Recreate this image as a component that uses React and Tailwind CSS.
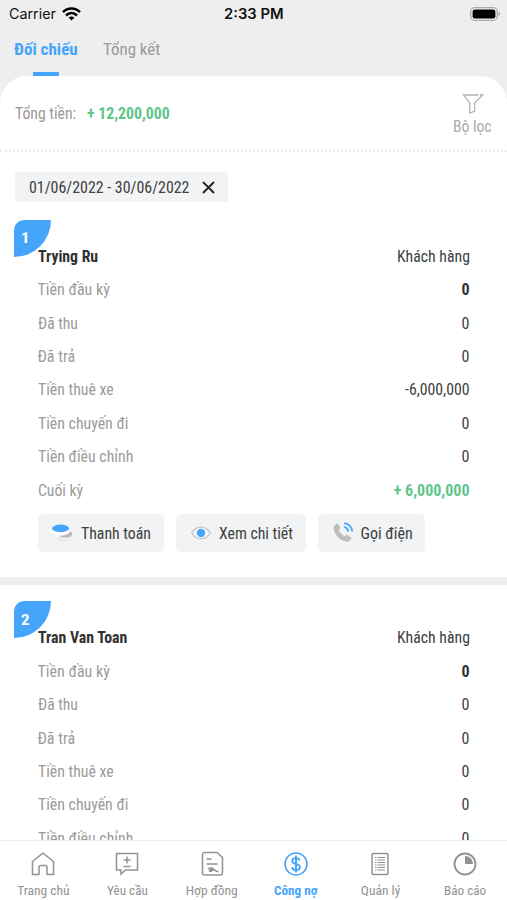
import { useLayoutEffect, useRef, useState } from "react";

// Single-line label condensed horizontally to the given width.
function Label({ w, right = false, className = "pt-[2px]", children }) {
  const ref = useRef(null);
  const [scale, setScale] = useState(1);
  useLayoutEffect(() => {
    setScale(w / ref.current.offsetWidth);
  }, [w, children]);
  return (
    <span className={`flex shrink-0 ${right ? "justify-end" : "justify-start"} ${className}`} style={{ width: w }}>
      <span
        ref={ref}
        className={`block shrink-0 whitespace-nowrap ${right ? "origin-right" : "origin-left"}`}
        style={{ transform: `scaleX(${scale})` }}
      >
        {children}
      </span>
    </span>
  );
}

function StatusBar() {
  return (
    <div className="flex h-[27px] shrink-0 items-center justify-between pl-[9px] pr-[6px] font-['Inter',sans-serif] text-[14px] text-[#111]">
      <div className="flex w-[215px] items-center gap-[6px]">
        <Label w={47} className="pt-px">Carrier</Label>
        <svg width="19" height="14" viewBox="0 0 19 14" fill="none" stroke="#000" strokeWidth="2.5">
          <path d="M1 5.2C5.8.3 13.2.3 18 5.2" />
          <path d="M4 8.5c3.2-3.2 7.8-3.2 11 0" />
          <path d="M6.6 10.6c1.7-1.6 4.1-1.6 5.8 0L9.5 13.6z" fill="#000" stroke="none" />
        </svg>
      </div>
      <Label w={59} className="pt-px font-semibold">2:33 PM</Label>
      <div className="flex grow justify-end">
        <svg width="31" height="14" viewBox="0 0 31 14">
          <rect x=".7" y=".7" width="26.6" height="12.6" rx="4" fill="#eee" stroke="#aaa" strokeWidth="1.3" />
          <rect x="2.6" y="2.4" width="22.8" height="9.2" rx="2.3" fill="#000" />
          <path d="M28.5 4.8c2.2.8 2.2 3.6 0 4.4z" fill="#aaa" />
        </svg>
      </div>
    </div>
  );
}

function Row({ label, w, value, vw, strong = false, green = false }) {
  return (
    <div className="flex h-[33.4px] items-center justify-between">
      <Label w={w} className="pt-[2px] text-[#9b9b9b]">{label}</Label>
      <Label
        w={vw}
        right
        className={
          green
            ? "pt-[2px] font-bold text-[#5fc58a]"
            : strong
              ? "pt-[2px] font-bold text-[#303030]"
              : "pt-[2px] text-[#404040]"
        }
      >
        {value}
      </Label>
    </div>
  );
}

const rows = [
  ["Tiền đầu kỳ", 72],
  ["Đã thu", 40],
  ["Đã trả", 38],
  ["Tiền thuê xe", 76],
  ["Tiền chuyến đi", 90],
  ["Tiền điều chỉnh", 95],
  ["Cuối kỳ", 45],
];

function Customer({ index, name, nameWidth, values, children }) {
  return (
    <section className="relative pl-[37.5px] pr-[37.5px]">
      <div className="absolute left-[14px] top-0 flex h-[37px] w-[37px] items-center rounded-br-[37px] rounded-tl-[10px] bg-[#45a5fb] pl-[7px] text-[15px] font-bold text-white">
        <Label w={9} className="">{index}</Label>
      </div>
      <div className="relative flex h-[53px] items-center justify-between pt-[19px]">
        <Label w={nameWidth} className="pt-[2px] font-bold text-[#303030]">{name}</Label>
        <Label w={73} right className="pt-[2px] text-[#404040]">Khách hàng</Label>
      </div>
      {rows.map(([label, w], i) => (
        <Row
          key={label}
          label={label}
          w={w}
          value={values[i]}
          vw={values[i] === "0" ? 8 : i === 6 ? 76 : 65}
          strong={i === 0}
          green={i === 6 && values[i] !== "0"}
        />
      ))}
      {children}
    </section>
  );
}

function CoinsIcon() {
  return (
    <svg width="22" height="20" viewBox="0 0 22 20">
      <ellipse cx="13.5" cy="14.5" rx="7.2" ry="3.8" fill="#e6e7e8" />
      <ellipse cx="14" cy="13" rx="7.2" ry="3.7" fill="#f5f5f5" />
      <ellipse cx="14.3" cy="11" rx="7" ry="3.8" fill="#bcb8b6" />
      <ellipse cx="9.6" cy="7.8" rx="9.4" ry="5" fill="#fff" />
      <ellipse cx="9.6" cy="5.3" rx="9" ry="4.4" fill="#fff" />
      <ellipse cx="9.6" cy="5.4" rx="8.5" ry="3.8" fill="#45a5fb" />
    </svg>
  );
}

function EyeIcon() {
  return (
    <svg width="20" height="14" viewBox="0 0 20 14">
      <path d="M.7 7C5.3-.9 14.7-.9 19.3 7 14.7 14.9 5.3 14.9.7 7z" fill="#f7f7f7" stroke="#c3c4c5" strokeWidth="1.3" />
      <circle cx="10" cy="7" r="4.2" fill="#45a5fb" />
    </svg>
  );
}

function CallIcon() {
  return (
    <svg width="21" height="21" viewBox="0 0 21 21" fill="none">
      <path
        d="M1.3 3.8 3.2 2c.7-.6 1.5-.5 2 .2l2 3c.4.7.2 1.4-.3 1.9L5.7 8.2c1 2.4 3 4.6 5.7 6l1.4-1c.7-.5 1.3-.5 2 0l3 2.1c.7.5.8 1.2.2 1.8l-1.900 1.900c-1 .8-2.600.8-4 .3C6 17.5 1.7 12.400.7 7.200.400 5.700.500 4.600 1.300 3.800z"
        fill="#bdbdbd"
      />
      <path d="M11.2 1.2c4.3.2 7.5 3.6 8 8.3" stroke="#45a5fb" strokeWidth="1.9" />
      <path d="M11 5.1c2.5.3 4 2 4.3 4.6" stroke="#45a5fb" strokeWidth="1.9" />
    </svg>
  );
}

function Action({ icon, label, w, className }) {
  return (
    <button className={`flex h-[38px] items-center rounded-[5px] bg-[#f1f3f4] text-[#404040] ${className}`}>
      {icon}
      <Label w={w}>{label}</Label>
    </button>
  );
}

function NavItem({ label, w, active = false, children }) {
  return (
    <div className={`flex w-[84.3px] flex-col items-center ${active ? "font-bold text-[#45a5fb]" : "text-[#929292]"}`}>
      <svg width="26" height="26" viewBox="0 0 26 26" fill="none" stroke="currentColor" strokeWidth="1.5">
        {children}
      </svg>
      <Label w={w} className="text-[13.5px] leading-[27px]">{label}</Label>
    </div>
  );
}

function BottomNav() {
  return (
    <nav className="relative flex h-[60px] shrink-0 items-start border-t border-[#eee] bg-white pl-px pt-[10px]">
      <NavItem label="Trang chủ" w={52}>
        <path d="M2.5 10.5 13 2l10.500 8.500V23.500H17v-7a2 2 0 0 0-2-2h-4a2 2 0 0 0-2 2v7H2.500z" strokeLinejoin="round" />
      </NavItem>
      <NavItem label="Yêu cầu" w={41}>
        <path d="M2.500 2.500h21v16.500H11.500L7 23v-4H2.500z" />
        <path d="M13 5.500v7M9.500 9h7M9.500 15.500h7" />
      </NavItem>
      <NavItem label="Hợp đồng" w={52}>
        <path d="M5.500 1.500H18l5.500 5v15.500a2 2 0 0 1-2 2h-16a2 2 0 0 1-2-2V3.500a2 2 0 0 1 2-2z" />
        <path d="M7.500 8h5M7.500 13h11M9 17.800c2.500-1.300 5-1.200 5 .4s-3.300 2.800-3.500 1.800 3.400-2.400 4.900-1.200c1.300 1 2 2.200 4.100 1.700" />
      </NavItem>
      <NavItem label="Công nợ" w={44} active>
        <circle cx="13" cy="13" r="11" />
        <path d="M16.700 9.500c-.5-1.700-1.900-2.400-3.700-2.400-2.300 0-3.800 1.100-3.800 2.800 0 4.100 7.700 1.900 7.700 6.100 0 1.800-1.600 3-3.900 3-2.100 0-3.600-.9-4-2.800M13 4.800v16.500" strokeWidth="1.900" />
      </NavItem>
      <NavItem label="Quản lý" w={39}>
        <rect x="5" y="2.500" width="16" height="21" rx="1" />
        <path d="M8 6.500h1.500M8 9h1.500M8 11.500h1.500M8 14h1.500M8 16.500h1.500M8 19h1.500M10.500 6.500H18M10.500 9H18M10.500 11.500H18M10.500 14H18M10.500 16.500H18M10.500 19H18" strokeWidth="1.100" />
      </NavItem>
      <NavItem label="Báo cáo" w={42}>
        <circle cx="13" cy="13" r="10.500" strokeWidth="1.900" />
        <path d="M13 5a8 8 0 0 1 8 8h-8z" fill="currentColor" stroke="none" />
      </NavItem>
    </nav>
  );
}

export default function App() {
  return (
    <div className="flex h-[900px] w-[507px] flex-col overflow-hidden bg-[#eee] font-['Roboto_Condensed','Roboto',sans-serif] text-[16px] leading-[20px] [font-stretch:75%]">
      <StatusBar />
      <div className="flex h-[49px] shrink-0 gap-[25px] pl-[14px]">
        <div className="flex flex-col items-center justify-between pt-[13px] font-bold text-[#45a5fb]">
          <Label w={64} className="">Đối chiếu</Label>
          <span className="h-[4px] w-[26px] bg-[#45a5fb]" />
        </div>
        <Label w={57} className="pt-[13px] text-[#999]">Tổng kết</Label>
      </div>
      <main className="flex min-h-0 grow flex-col overflow-hidden rounded-t-[27px] bg-white">
        <div className="flex h-[76px] shrink-0 items-center border-b-2 border-dotted border-[#ececec] pl-[15px] pr-[15px]">
          <Label w={61} className="pt-[2px] text-[#999]">Tổng tiền:</Label>
          <Label w={83} className="ml-[11px] pt-[2px] font-bold text-[#5fc58a]">+ 12,200,000</Label>
          <div className="ml-auto flex flex-col items-center text-[#aaa]">
            <svg width="22" height="22" viewBox="0 0 22 22" fill="none" stroke="#b5b5b5" strokeWidth="1.300" className="mt-[4px]">
              <path d="M16.500 2H1.500l6.300 8v10l4.800-2v-8L20.500 2H18" />
            </svg>
            <Label w={39}>Bộ lọc</Label>
          </div>
        </div>
        <div className="ml-[15px] mt-[20px] flex h-[30px] w-[213px] shrink-0 items-center bg-[#f1f3f4] pl-[14px] text-[#404040]">
          <Label w={160}>01/06/2022 - 30/06/2022</Label>
          <svg width="13" height="13" viewBox="0 0 13 13" fill="none" stroke="#222" strokeWidth="1.800" className="ml-[13px]">
            <path d="m1 1 11 11M12 1 1 12" />
          </svg>
        </div>
        <div className="mt-[17.500px] min-h-0 grow overflow-hidden">
          <Customer index="1" name="Trying Ru" nameWidth={60} values={["0", "0", "0", "-6,000,000", "0", "0", "+ 6,000,000"]}>
            <div className="mt-[7.500px] flex gap-[12px]">
              <Action className="w-[126px] gap-[8px] pl-[13px]" icon={<CoinsIcon />} label="Thanh toán" w={70} />
              <Action className="w-[130px] gap-[8px] pl-[15px]" icon={<EyeIcon />} label="Xem chi tiết" w={74} />
              <Action className="w-[107px] gap-[7px] pl-[15px]" icon={<CallIcon />} label="Gọi điện" w={52} />
            </div>
          </Customer>
          <div className="mb-[16.500px] mt-[25px] h-[8px] bg-[#eee]" />
          <Customer index="2" name="Tran Van Toan" nameWidth={89} values={["0", "0", "0", "0", "0", "0", "0"]} />
        </div>
      </main>
      <BottomNav />
    </div>
  );
}
